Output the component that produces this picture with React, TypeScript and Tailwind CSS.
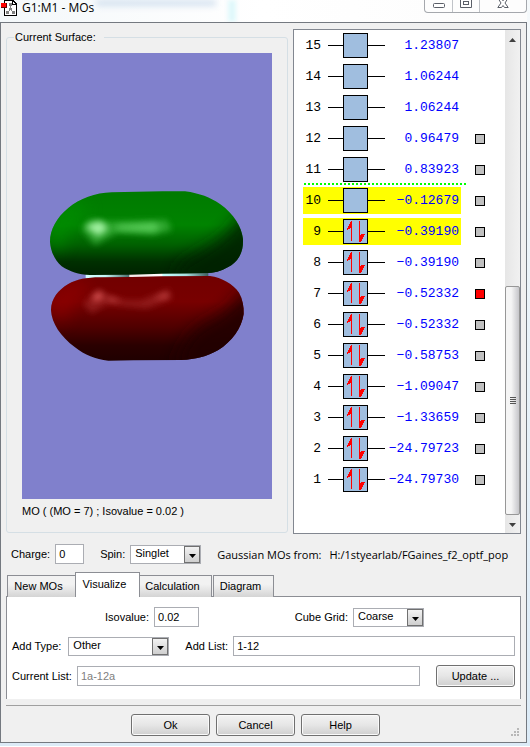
import type { ReactNode } from "react";

type Orbital = {
  n: number;
  energy: string;
  filled?: boolean;
  mark?: "none" | "red" | "grey";
  selected?: boolean;
};

const orbitals: Orbital[] = [
  { n: 15, energy: "1.23807", mark: "none" },
  { n: 14, energy: "1.06244", mark: "none" },
  { n: 13, energy: "1.06244", mark: "none" },
  { n: 12, energy: "0.96479" },
  { n: 11, energy: "0.83923" },
  { n: 10, energy: "−0.12679", selected: true },
  { n: 9, energy: "−0.39190", filled: true, selected: true },
  { n: 8, energy: "−0.39190", filled: true },
  { n: 7, energy: "−0.52332", filled: true, mark: "red" },
  { n: 6, energy: "−0.52332", filled: true },
  { n: 5, energy: "−0.58753", filled: true },
  { n: 4, energy: "−1.09047", filled: true },
  { n: 3, energy: "−1.33659", filled: true },
  { n: 2, energy: "−24.79723", filled: true },
  { n: 1, energy: "−24.79730", filled: true },
];

const inputClass = "h-5 border border-[#abadb3] bg-white px-[3px] outline-none";

function PushButton({ children }: { children: ReactNode }) {
  return (
    <button
      type="button"
      className="h-[22px] w-[79px] rounded-[3px] border border-[#707070] bg-linear-to-b from-[#f3f3f3] via-[#e6e6e6] to-[#cfcfcf] shadow-[inset_0_0_0_1px_#fafafa]"
    >
      {children}
    </button>
  );
}

function Dropdown({ id, value, className }: { id: string; value: string; className: string }) {
  return (
    <div className={`relative h-[19px] ${className}`}>
      <select
        id={id}
        defaultValue={value}
        className="block h-full w-full appearance-none border border-[#abadb3] bg-white pr-5 pb-px pl-1 outline-none"
      >
        <option>{value}</option>
      </select>
      <span className="pointer-events-none absolute top-px right-px flex h-[17px] w-4 items-center justify-center border border-[#707070] bg-linear-to-b from-[#f2f2f2] to-[#cfcfcf]">
        <svg viewBox="0 0 7 4" className="mt-1 h-1 w-[7px]">
          <path d="M0 0h7L3.500 4z" fill="#000" />
        </svg>
      </span>
    </div>
  );
}

function AppIcon() {
  return (
    <svg viewBox="0 0 17 16" className="h-4 w-[17px]" shapeRendering="crispEdges">
      <path d="M4 0h9l4 4v12H4z" fill="#000" />
      <path d="M5 1h7v4h4v10H5z" fill="#fff" />
      <path d="M13 2v2h2z" fill="#fff" />
      <path d="M10 5h1v4h-1zM9 9h1v2H9zM11 9h1v2h-1z" fill="#808080" />
      <path d="M9 3h3v3H9zM9 8h3v2H9zM6 11h3v3H6zM12 11h3v3h-3z" fill="#808080" />
      <path d="M1 3h6v5H1z" fill="#600" />
      <path d="M1 3h5v4H1z" fill="#f00" />
    </svg>
  );
}

function TitleBar() {
  return (
    <header className="relative flex h-[22px] items-start justify-between overflow-hidden bg-linear-to-r from-[#f4f8fa] via-white to-[#fcfcfc]">
      <div aria-hidden="true" className="absolute top-0 left-24 h-1.5 w-[120px] bg-[#b9cfe6] opacity-60 blur-[3px]" />
      <div aria-hidden="true" className="absolute top-0 left-[228px] h-full w-2 bg-[#dff8fb] blur-[2px]" />
      <div className="relative flex items-center gap-[5px]">
        <AppIcon />
        <h1 className="font-['Open_Sans',sans-serif] text-xs leading-4">G1:M1 - MOs</h1>
      </div>
      <div className="relative flex h-[13px] rounded-b-[4px] border border-t-0 border-[#a5a8ad] bg-[#fdfdfd]">
        <button type="button" aria-label="Minimize" className="flex w-7 items-start justify-center border-r border-[#c0c3c8]">
          <svg viewBox="0 0 12 9" className="h-[9px] w-3">
            <rect x=".5" y="3.500" width="11" height="4" rx="1" fill="#fff" stroke="#5b5f68" />
          </svg>
        </button>
        <button type="button" aria-label="Maximize" className="flex w-[27px] items-start justify-center border-r border-[#c0c3c8]">
          <svg viewBox="0 0 12 9" className="h-[9px] w-3">
            <path d="M.5-2v9.500h11V-2" fill="#fff" stroke="#5b5f68" />
            <rect x="3.500" y="1.500" width="5" height="3" fill="#fff" stroke="#5b5f68" />
          </svg>
        </button>
        <button type="button" aria-label="Close" className="flex w-[46px] items-start justify-center">
          <svg viewBox="0 0 12 9" className="h-[9px] w-3">
            <path d="M1.500-1 4 3 .8 7.500h3.700L6 5.500l1.500 2h3.700L8 3l2.500-4H7L6 .8 5-1z" fill="#fff" stroke="#5b5f68" />
          </svg>
        </button>
      </div>
    </header>
  );
}

const greenLobe =
  "M30 185C30 150 50 112 85 84C120 56 165 38 215 37L367 34L435 34C480 40 510 52 540 72C582 102 605 140 609 178C610 212 600 236 575 255C550 270 530 278 505 279L365 281L270 284L150 285C115 284 90 275 65 259C42 238 32 212 30 185Z";
const redLobe =
  "M33 390C34 355 55 330 85 312C110 298 140 292 180 292L275 291L365 289L510 288C545 293 580 312 597 338C608 358 612 380 611 402C605 445 575 485 535 510C500 530 465 538 425 540L280 541L205 542C165 538 135 525 105 502C62 470 35 430 33 390Z";

function Surface() {
  return (
    <svg viewBox="-54 -381 750 1338" role="img" aria-label="Orbital surface" className="block w-full bg-[#8080cc]">
      <defs>
        <linearGradient id="green" x1="0" y1="0" x2="0" y2="1">
          <stop offset="0" stopColor="#007a00" />
          <stop offset=".4" stopColor="#008300" />
          <stop offset=".64" stopColor="#006000" />
          <stop offset=".84" stopColor="#003000" />
          <stop offset="1" stopColor="#002200" />
        </linearGradient>
        <linearGradient id="red" x1="0" y1="0" x2="0" y2="1">
          <stop offset="0" stopColor="#720000" />
          <stop offset=".3" stopColor="#780000" />
          <stop offset=".6" stopColor="#500000" />
          <stop offset=".82" stopColor="#2a0000" />
          <stop offset="1" stopColor="#200000" />
        </linearGradient>
        <linearGradient id="bond" x1="0" y1="0" x2="1" y2="0">
          <stop offset="0" stopColor="#d5ffff" />
          <stop offset=".16" stopColor="#c5f5f5" />
          <stop offset=".35" stopColor="#4d7070" />
          <stop offset=".36" stopColor="#f5e6e6" />
          <stop offset=".62" stopColor="#fff" />
          <stop offset=".63" stopColor="#c8ffff" />
          <stop offset=".82" stopColor="#a8e0e0" />
          <stop offset="1" stopColor="#3d5d5d" />
        </linearGradient>
        <filter id="soft" x="-50%" y="-50%" width="200%" height="200%">
          <feGaussianBlur stdDeviation="24" />
        </filter>
        <filter id="shine" x="-50%" y="-100%" width="200%" height="300%">
          <feGaussianBlur stdDeviation="9" />
        </filter>
        <clipPath id="greenClip">
          <path d={greenLobe} />
        </clipPath>
        <clipPath id="redClip">
          <path d={redLobe} />
        </clipPath>
      </defs>
      <path d="M137 280L505 274V290L137 295Z" fill="url(#bond)" />
      <path d={greenLobe} fill="url(#green)" />
      <g clipPath="url(#greenClip)">
        <path d="M20 170Q40 90 110 60L150 90Q80 130 60 220Z" fill="#009000" opacity=".7" filter="url(#soft)" />
        <path d="M650 80L600 110Q565 160 520 190Q470 225 420 250L400 320H650Z" fill="#002000" opacity=".9" filter="url(#soft)" />
        <path d="M125 148L150 118L210 125L380 120L395 150L340 165L230 158L165 195Z" fill="#3fb43f" opacity=".75" filter="url(#shine)" />
        <path d="M135 138L180 122L205 145L175 168Z" fill="#b5ffb5" opacity=".85" filter="url(#shine)" />
        <path d="M230 138L345 130L360 144L340 154L230 148Z" fill="#67dc67" opacity=".75" filter="url(#shine)" />
      </g>
      <path d={redLobe} fill="url(#red)" />
      <g clipPath="url(#redClip)">
        <path d="M20 380Q50 310 120 300L150 330Q90 370 70 430Z" fill="#920000" opacity=".7" filter="url(#soft)" />
        <path d="M650 310L600 345Q560 400 490 430Q430 465 400 570H650Z" fill="#200000" opacity=".9" filter="url(#soft)" />
        <path d="M130 372L175 325L205 345L260 362L305 362L385 325L398 355L320 385L200 372L155 400Z" fill="#a02c2c" opacity=".65" filter="url(#shine)" />
        <path d="M155 352L178 334L192 350L168 364ZM200 350L245 362L210 362ZM340 356L380 340L385 352Z" fill="#ff7070" opacity=".65" filter="url(#shine)" />
      </g>
    </svg>
  );
}

function OrbitalBox({ filled }: { filled?: boolean }) {
  return (
    <svg viewBox="0 0 57 25" className="block h-[25px] w-[57px]" shapeRendering="crispEdges">
      <path d="M0 12h57v1H0z" fill="#000" />
      <path d="M15 0h25v25H15z" fill="#000" />
      <path d="M16 1h23v23H16z" fill="#a0bedf" />
      {filled && (
        <g fill="#f00">
          <path d="M23 2h1v20h-1V9h-1v1h-2v1h-1V9h1V7h1V5h1V3h1z" />
          <path d="M31 2h1v14h1v-1h4v1h-1v2h-1v2h-1v2h-1v1h-2z" />
        </g>
      )}
    </svg>
  );
}

function Marker({ mark }: { mark: "none" | "red" | "grey" }) {
  if (mark === "none") return null;
  return <i className={mark === "red" ? "size-2.5 border border-black bg-[#f00]" : "size-2.5 border border-black bg-[#c0c0c0]"} />;
}

function OrbitalRow({ n, energy, filled, mark = "grey", selected }: Orbital) {
  return (
    <li className="flex h-[31px] items-center gap-3.5">
      <div className={selected ? "flex h-[27px] w-[158px] items-center bg-[#ff0]" : "flex h-[27px] w-[158px] items-center"}>
        <span className="w-[18px] text-right">{n}</span>
        <span className="ml-[7px]">
          <OrbitalBox filled={filled} />
        </span>
        <span className="flex-1 pr-0.5 text-right whitespace-nowrap text-[#00f]">{energy}</span>
      </div>
      <Marker mark={mark} />
    </li>
  );
}

function ScrollBar() {
  return (
    <div className="flex w-[15px] flex-col items-center bg-linear-to-r from-[#e6e6e6] to-[#f1f1f1]">
      <svg viewBox="0 0 7 4" className="mt-2 h-1 w-[7px]">
        <path d="M3.500 0 7 4H0z" fill="#404040" />
      </svg>
      <div className="mt-auto flex h-[229px] w-full flex-col items-center justify-center gap-px rounded-[2px] border border-[#979797] bg-linear-to-r from-[#f5f5f5] from-40% to-[#c6c6ca]">
        <i className="h-px w-1.5 bg-[#555]" />
        <i className="h-px w-1.5 bg-[#555]" />
        <i className="h-px w-1.5 bg-[#555]" />
        <i className="h-px w-1.5 bg-[#555]" />
      </div>
      <svg viewBox="0 0 7 4" className="mt-2 mb-1.5 h-1 w-[7px]">
        <path d="M0 0h7L3.500 4z" fill="#404040" />
      </svg>
    </div>
  );
}

function OrbitalList() {
  return (
    <div className="flex w-[228px] shrink-0 justify-between border border-[#828790] bg-white">
      <ol className="relative pl-[9px] font-['Liberation_Mono',monospace] text-[13px]">
        {orbitals.map((orbital) => (
          <OrbitalRow key={orbital.n} {...orbital} />
        ))}
        {/* HOMO / LUMO gap */}
        <li className="absolute top-[153px] left-2.5 h-0.5 w-[162px] bg-[repeating-linear-gradient(90deg,#0f0_0_2px,#fff_2px_4px)]" />
      </ol>
      <ScrollBar />
    </div>
  );
}

const inactiveTab = "h-[22px] border border-b-0 border-[#8c8e94] bg-linear-to-b from-[#f2f2f2] from-40% to-[#d4d4d4] pr-1.5";

function Tabs() {
  return (
    <div role="tablist" className="relative z-10 -mb-px flex items-end px-px">
      <button type="button" role="tab" className={`${inactiveTab} w-[68px] border-r-0`}>New MOs</button>
      <button type="button" role="tab" aria-selected="true" className="h-[25px] w-[65px] border border-b-0 border-[#8c8e94] bg-white pr-1.5 pb-0.5">
        Visualize
      </button>
      <button type="button" role="tab" className={`${inactiveTab} w-[72px] border-l-0`}>Calculation</button>
      <button type="button" role="tab" className={`${inactiveTab} ml-px w-[61px]`}>Diagram</button>
    </div>
  );
}

export default function App() {
  return (
    <div className="bg-linear-to-b from-[#f5f9fb] to-[#dcebf7] pr-[3px] pb-[3px] font-['Liberation_Sans',Arial,sans-serif] text-[11px] leading-[13px] text-black">
      <TitleBar />
      <main className="border border-[#747980] bg-[#f0f0f0] px-[5px] pb-1.5">
        <div className="flex gap-[5px] pt-1.5">
          <fieldset className="mt-0.5 mb-px min-w-0 flex-1 rounded-[3px] border border-[#d5dfe5] px-[15px] pb-[14px]">
            <legend className="-ml-2 px-px pr-2">Current Surface:</legend>
            <div className="mt-[9px]">
              <Surface />
            </div>
            <p className="mt-1.5">MO ( (MO = 7) ; Isovalue = 0.02 )</p>
          </fieldset>
          <OrbitalList />
        </div>

        <div className="mt-2.5 flex h-5 items-center pl-[5px]">
          <label htmlFor="charge">Charge:</label>
          <input id="charge" defaultValue="0" className={`${inputClass} ml-[5px] w-[29px]`} />
          <label htmlFor="spin" className="ml-4">Spin:</label>
          <Dropdown id="spin" value="Singlet" className="ml-[5px] w-[71px]" />
          <p className="ml-4 flex gap-2 font-['Open_Sans',sans-serif] whitespace-nowrap">
            <span>Gaussian MOs from:</span>
            <span>H:/1styearlab/FGaines_f2_optf_pop</span>
          </p>
        </div>

        <div className="mt-2">
          <Tabs />
          <div className="flex flex-col gap-[9px] border border-b-0 border-[#8c8e94] bg-white px-[5px] pt-2.5 pb-3">
            <div className="flex items-center pl-[93px]">
              <label htmlFor="isovalue">Isovalue:</label>
              <input id="isovalue" defaultValue="0.02" className={`${inputClass} ml-[5px] w-[45px]`} />
              <label htmlFor="grid" className="ml-auto">Cube Grid:</label>
              <Dropdown id="grid" value="Coarse" className="mr-[91px] ml-[5px] w-[71px]" />
            </div>
            <div className="flex items-center">
              <label htmlFor="type">Add Type:</label>
              <Dropdown id="type" value="Other" className="ml-[7px] w-[101px]" />
              <label htmlFor="list" className="ml-4">Add List:</label>
              <input id="list" defaultValue="1-12" className={`${inputClass} ml-[5px] min-w-0 flex-1`} />
            </div>
            <div className="flex items-center">
              <label htmlFor="current">Current List:</label>
              <input id="current" readOnly defaultValue="1a-12a" className={`${inputClass} ml-[5px] min-w-0 flex-1 text-[#808080]`} />
              <div className="ml-4">
                <PushButton>Update ...</PushButton>
              </div>
            </div>
          </div>
        </div>

        <div className="relative mt-1.5 border-t border-[#a0a0a0] pt-2">
          <div className="flex justify-center gap-1.5 pr-4">
            <PushButton>Ok</PushButton>
            <PushButton>Cancel</PushButton>
            <PushButton>Help</PushButton>
          </div>
          <svg viewBox="0 0 8 8" className="absolute right-0.5 bottom-0 size-2" fill="#b8b8b8">
            <path d="M6 0h2v2H6zM3 3h2v2H3zM6 3h2v2H6zM0 6h2v2H0zM3 6h2v2H3zM6 6h2v2H6z" />
          </svg>
        </div>
      </main>
    </div>
  );
}
